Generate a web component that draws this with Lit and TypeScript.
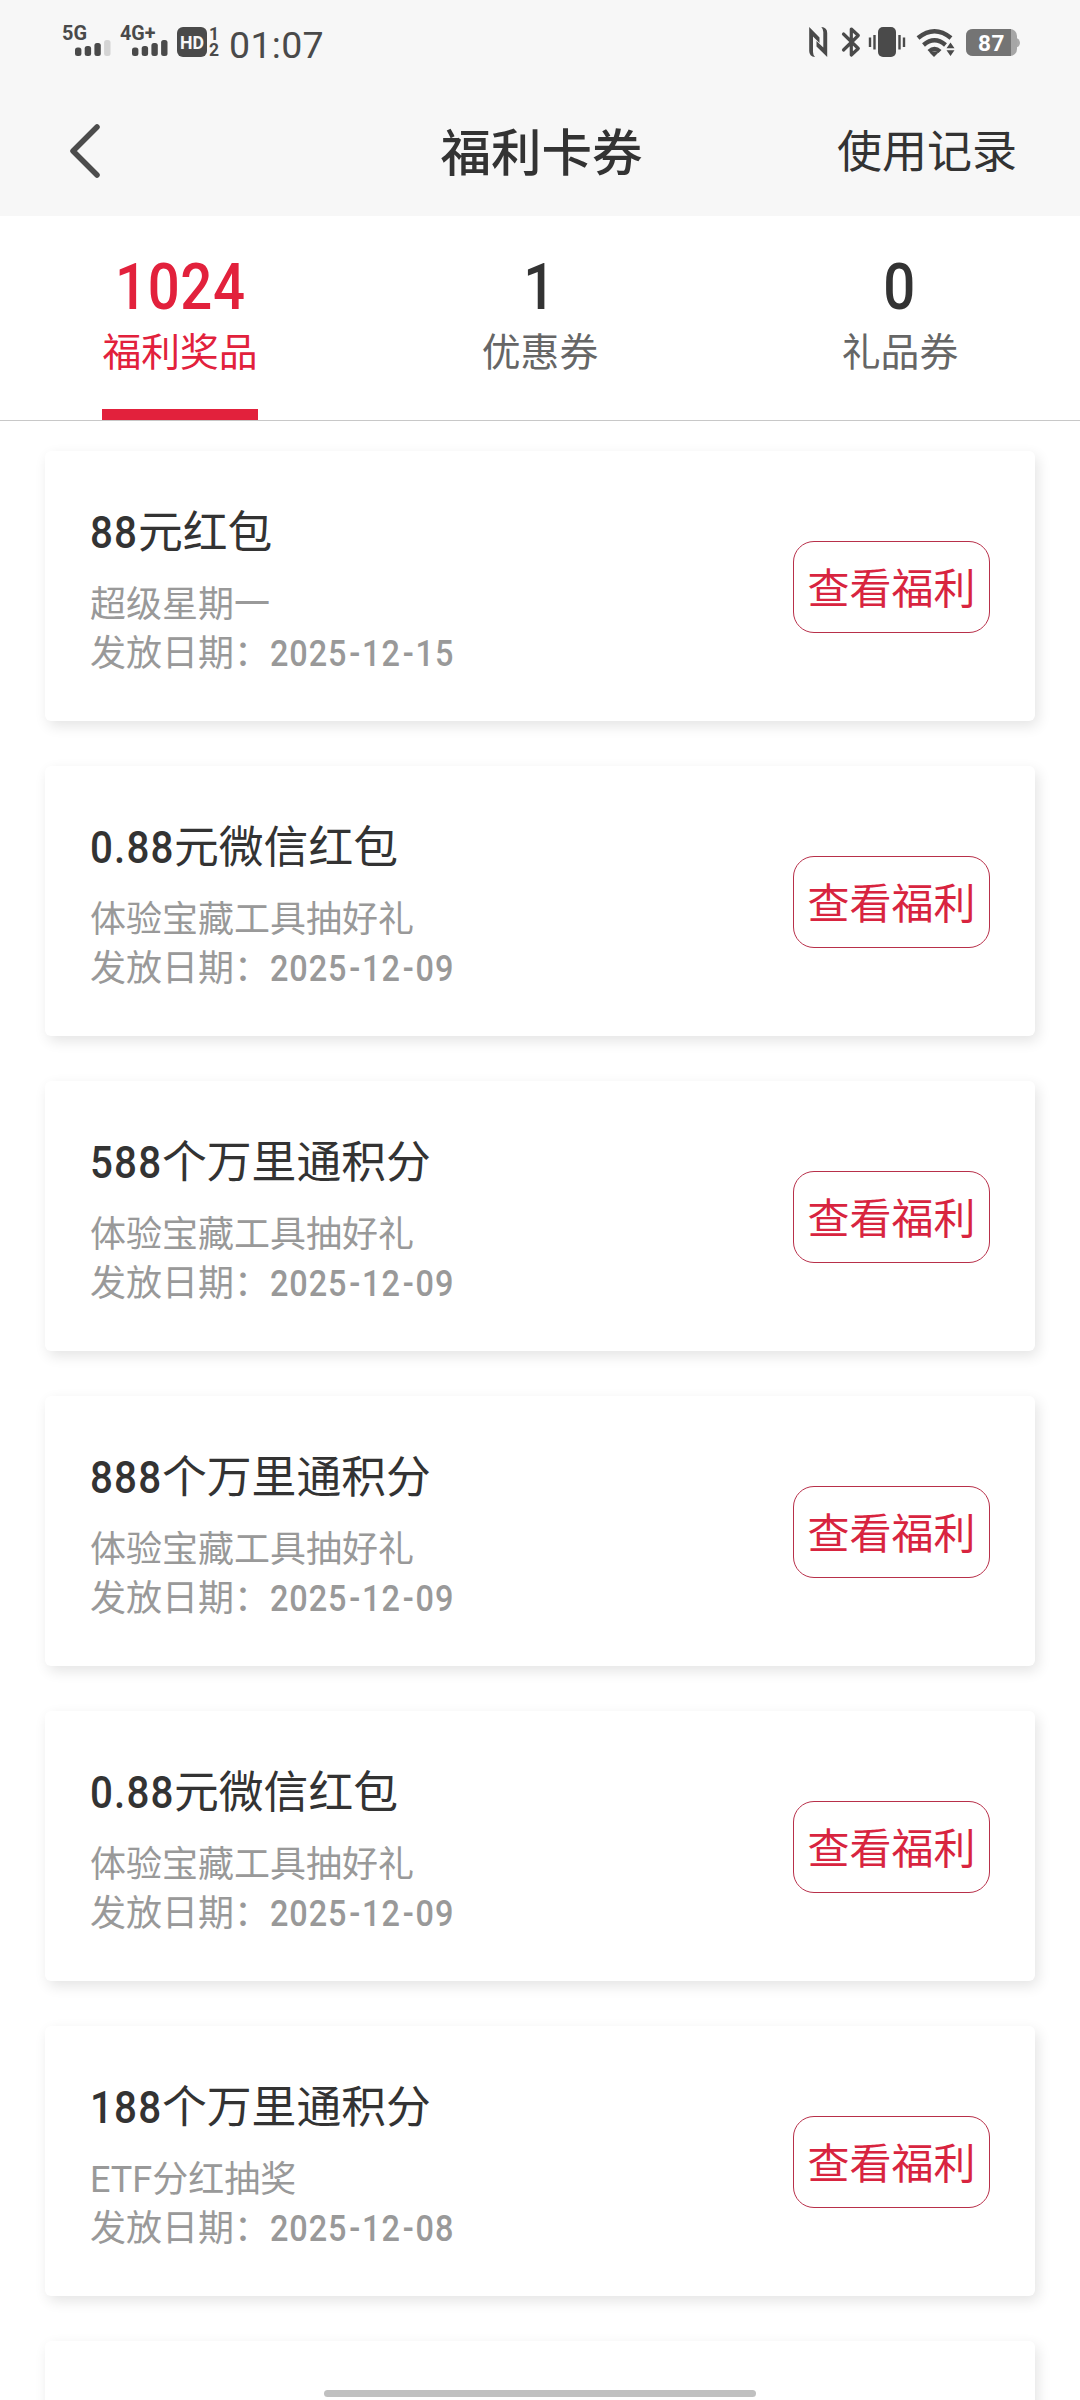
import { LitElement, html, css, svg } from "lit";
import { customElement, property, state } from "lit/decorators.js";
import { classMap } from "lit/directives/class-map.js";
import { styleMap } from "lit/directives/style-map.js";

interface Prize {
  amount: string;
  name: string;
  activity: string;
  date: string;
}

const PRIZES: Prize[] = [
  { amount: "88", name: "元红包", activity: "超级星期一", date: "2025-12-15" },
  { amount: "0.88", name: "元微信红包", activity: "体验宝藏工具抽好礼", date: "2025-12-09" },
  { amount: "588", name: "个万里通积分", activity: "体验宝藏工具抽好礼", date: "2025-12-09" },
  { amount: "888", name: "个万里通积分", activity: "体验宝藏工具抽好礼", date: "2025-12-09" },
  { amount: "0.88", name: "元微信红包", activity: "体验宝藏工具抽好礼", date: "2025-12-09" },
  { amount: "188", name: "个万里通积分", activity: "ETF分红抽奖", date: "2025-12-08" },
];

const TABS = [
  { count: "1024", label: "福利奖品" },
  { count: "1", label: "优惠券" },
  { count: "0", label: "礼品券" },
];

// Advance widths of the condensed numerals in a card title.
const DIGIT_WIDTH = 24;
const DOT_WIDTH = 12;

const amountWidth = (amount: string) =>
  [...amount].reduce((sum, ch) => sum + (ch === "." ? DOT_WIDTH : DIGIT_WIDTH), 0);

@customElement("status-bar")
export class StatusBar extends LitElement {
  static styles = css`
    :host {
      display: flex;
      justify-content: space-between;
      height: 84px;
      padding: 10px 60px 0 40px;
      box-sizing: border-box;
      color: #4a4a4a;
      font-family: Roboto, "Noto Sans CJK SC", sans-serif;
    }
    .group {
      display: flex;
      height: 60px;
    }
    svg {
      display: block;
      fill: currentColor;
    }
    .net {
      font: 700 21px Roboto, sans-serif;
    }
    .sim {
      font: 700 17.5px Roboto, sans-serif;
    }
    .time {
      font-size: 37.5px;
      line-height: 70px;
      letter-spacing: 0.3px;
    }
    .hd {
      font: 700 19px Roboto, sans-serif;
      fill: #f7f7f7;
    }
    .level {
      font: 700 22.5px Roboto, sans-serif;
      fill: #fff;
    }
    .line {
      fill: none;
      stroke: currentColor;
    }
  `;

  private bars(x: number, tops: number[], dim: number) {
    return tops.map(
      (top, i) => svg`<rect x=${x + i * 9.7} y=${top} width="6.4" height=${46 - top} rx="2.5" opacity=${i === dim ? 0.2 : 1}></rect>`,
    );
  }

  render() {
    return html`
      <div class="group">
        <svg width="75" height="60" viewBox="0 0 75 60">
          <text class="net" x="22" y="29.5" textLength="25" lengthAdjust="spacingAndGlyphs">5G</text>
          ${this.bars(35, [37.5, 36, 33, 30], 3)}
        </svg>
        <svg width="60" height="60" viewBox="75 0 60 60">
          <text class="net" x="80" y="29.5" textLength="35.5" lengthAdjust="spacingAndGlyphs">4G+</text>
          ${this.bars(92, [37.5, 36, 33, 30], -1)}
        </svg>
        <svg width="54" height="60" viewBox="135 0 54 60">
          <rect x="137" y="17" width="30" height="30" rx="6"></rect>
          <text class="hd" x="140" y="39" textLength="24" lengthAdjust="spacingAndGlyphs">HD</text>
          <text class="sim" x="169" y="29.5">1</text>
          <text class="sim" x="169" y="46">2</text>
        </svg>
        <span class="time">01:07</span>
      </div>
      <div class="group">
        <svg width="34" height="60" viewBox="24 0 34 60">
          <path d="M29.2 17 L39.5 27.5 V33 L33 26.500 V42 Q33 45 35 47 Q29.2 46.5 29.2 41 Z"></path>
          <path d="M47.200 47 L36.5 36.500 V31 L43.300 37.500 V22 Q43.300 19 41.300 17 Q47.200 17.5 47.200 23 Z"></path>
        </svg>
        <svg width="28" height="60" viewBox="58 0 28 60">
          <path class="line" stroke-width="3.2" stroke-linejoin="round" stroke-linecap="round"
            d="M63.5 24 L78.3 38.5 L71.300 45 V19 L78.3 25.500 L63.5 40"></path>
        </svg>
        <svg width="46" height="60" viewBox="86 0 46 60">
          <rect x="98" y="17" width="18" height="30" rx="5"></rect>
          <path class="line" stroke-width="2.400" d="M90 27.500V37 M94.500 25V39.500 M119.500 25V39.500 M124 27.500V37"></path>
        </svg>
        <svg width="50" height="60" viewBox="132 0 50 60">
          <path class="line" stroke-width="4.400" d="M138 28 Q154.500 14.500 171 28 M143.500 35 Q154.500 25.500 165.500 35"></path>
          <path d="M147.500 40 Q154.500 33.500 161.500 40 L158.500 43 Q154.500 39.500 150.500 43 Z"></path>
          <path d="M149.500 42.500 Q154 40.500 158.500 42.500 L154 47 Z"></path>
          <path d="M170.500 32.500 L174.500 38.300 H166.500 Z M166.500 40.300 H174.500 L170.500 46 Z"></path>
        </svg>
        <svg width="58" height="60" viewBox="182 0 58 60">
          <path d="M236 28 Q239.500 28.500 240 33 Q239.500 37 236 37.500Z" fill="#aaa"></path>
          <rect x="186" y="19" width="51" height="27" rx="7" fill="#a6a6a6"></rect>
          <path d="M193 19 H231 V46 H193 Q186 46 186 39 V26 Q186 19 193 19Z" fill="#747474"></path>
          <text class="level" x="198" y="41" textLength="26.500">87</text>
        </svg>
      </div>
    `;
  }
}

@customElement("prize-card")
export class PrizeCard extends LitElement {
  static styles = css`
    :host {
      display: flex;
      align-items: center;
      justify-content: space-between;
      height: 270px;
      padding: 0 45px;
      box-sizing: border-box;
      border-radius: 6px;
      background: #fff;
      box-shadow: 3px 5px 14px rgba(0, 0, 0, 0.11);
    }
    .info {
      padding-top: 10px;
    }
    .title {
      margin: 0 0 18px;
      color: #333;
      font-size: 44.8px;
      font-weight: 400;
      line-height: 60px;
      white-space: nowrap;
    }
    .amount,
    .date {
      display: inline-block;
      font-weight: 500;
      transform: scaleX(0.9);
      transform-origin: left;
      white-space: nowrap;
    }
    .amount {
      letter-spacing: 1.3px;
    }
    .line {
      height: 49px;
      color: #999;
      font-size: 36px;
      line-height: 49px;
      white-space: nowrap;
    }
    .date {
      letter-spacing: 1px;
    }
    .dash {
      display: inline-block;
      width: 16.5px;
      text-align: center;
      letter-spacing: 0;
    }
    .view {
      width: 197px;
      height: 92px;
      margin: 2px 0 0;
      padding: 5px 0 0;
      border: 1px solid #b8304a;
      border-radius: 21px;
      background: none;
      color: #d8243f;
      font: inherit;
      font-size: 42px;
      line-height: 60px;
      white-space: nowrap;
    }
  `;

  @property({ attribute: false }) prize!: Prize;

  render() {
    const { amount, name, activity, date } = this.prize;
    return html`
      <div class="info">
        <h2 class="title"><span class="amount" style=${styleMap({ width: `${amountWidth(amount)}px` })}>${amount}</span>${name}</h2>
        <div class="line">${activity}</div>
        <div class="line">发放日期：<span class="date">${date
          .split("-")
          .map((part, i) => (i ? html`<span class="dash">-</span>${part}` : part))}</span></div>
      </div>
      <button class="view">查看福利</button>
    `;
  }
}

@customElement("app-root")
export class AppRoot extends LitElement {
  static styles = css`
    :host {
      display: flex;
      flex-direction: column;
      position: relative;
      width: 1080px;
      height: 2400px;
      overflow: hidden;
      background: #fff;
      font-family: Roboto, "Noto Sans CJK SC", sans-serif;
      color: #333;
    }
    .top {
      flex: none;
      height: 216px;
      background: #f7f7f7;
    }
    .nav {
      display: grid;
      grid-template-columns: 1fr auto 1fr;
      align-items: center;
      height: 132px;
      box-sizing: border-box;
      padding: 2px 63px 0 66px;
    }
    .back {
      display: block;
      fill: none;
      stroke: #4c4c4c;
    }
    .heading {
      margin: 0;
      padding-top: 5px;
      font-size: 50.500px;
      font-weight: 500;
      line-height: 70px;
    }
    .history {
      justify-self: end;
      padding-top: 4px;
      font-size: 45px;
      line-height: 64px;
    }
    .tabs {
      flex: none;
      display: grid;
      grid-template-columns: repeat(3, 1fr);
      justify-items: center;
      height: 205px;
      box-sizing: border-box;
      border-bottom: 1px solid #c8c8c8;
    }
    .tab {
      display: flex;
      flex-direction: column;
      align-items: center;
      box-sizing: border-box;
      height: 204px;
      padding-top: 34px;
      color: #666;
    }
    .count {
      color: #333;
      font-size: 64px;
      font-weight: 500;
      line-height: 76px;
      letter-spacing: 0.8px;
      transform: scaleX(0.88);
    }
    .label {
      font-size: 38.8px;
      line-height: 54px;
    }
    .active,
    .active .count {
      color: #e2213c;
    }
    .active {
      width: 156px;
      border-bottom: 11px solid #e2213c;
    }
    .list {
      display: flex;
      flex-direction: column;
      gap: 45px;
      padding: 30px 45px 0;
    }
    .peek {
      height: 270px;
      border-radius: 6px;
      background: #fff;
      box-shadow: 3px 5px 14px rgba(0, 0, 0, 0.11);
    }
    .home {
      position: absolute;
      left: 324px;
      bottom: 3px;
      width: 432px;
      height: 7px;
      border-radius: 4px;
      background: #c0c0c0;
    }
  `;

  @state() private current = 0;

  render() {
    return html`
      <header class="top">
        <status-bar></status-bar>
        <nav class="nav">
          <svg class="back" width="40" height="60" viewBox="0 0 40 60">
            <path d="M31 6 L7 30 L31 54" stroke-width="5.500" stroke-linecap="round" stroke-linejoin="round"></path>
          </svg>
          <h1 class="heading">福利卡券</h1>
          <span class="history">使用记录</span>
        </nav>
      </header>
      <div class="tabs">
        ${TABS.map(
          (tab, i) => html`
            <div class=${classMap({ tab: true, active: i === this.current })} @click=${() => (this.current = i)}>
              <span class="count">${tab.count}</span>
              <span class="label">${tab.label}</span>
            </div>
          `,
        )}
      </div>
      <main class="list">
        ${PRIZES.map((prize) => html`<prize-card .prize=${prize}></prize-card>`)}
        <div class="peek"></div>
      </main>
      <div class="home"></div>
    `;
  }
}
